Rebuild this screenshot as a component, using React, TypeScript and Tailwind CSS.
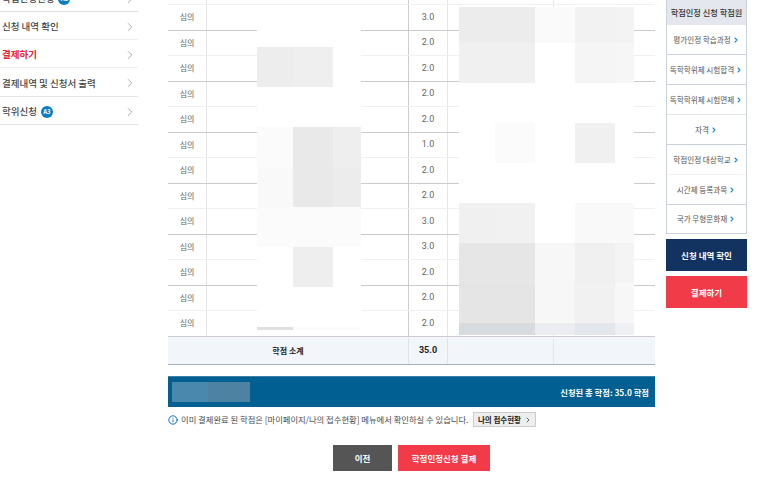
import { ChevronRight, Info } from "lucide-react";

const font = { fontFamily: '"Noto Sans CJK KR", "Noto Sans", sans-serif' };

const sideItems = [
  { label: "학점인정신청", badge: "A1", h: "h-[28px]", line: "border-[#dddddd]" },
  { label: "신청 내역 확인", h: "h-[28px]", line: "border-[#eeeeee]" },
  { label: "결제하기", active: true, h: "h-[28px]", line: "border-[#eeeeee]" },
  { label: "결제내역 및 신청서 출력", h: "h-[29px]", line: "border-[#e6e6e6]" },
  { label: "학위신청", badge: "A3", h: "h-[28px]", line: "border-[#e2e2e2]" },
];

const credits = ["3.0", "2.0", "2.0", "2.0", "2.0", "1.0", "2.0", "2.0", "3.0", "3.0", "2.0", "2.0", "2.0"];

const guideItems = [
  { label: "평가인정 학습과정", h: "h-[30px]", line: "border-[#ccd2da]" },
  { label: "독학학위제 시험합격", h: "h-[30px]", line: "border-[#ccd2da]" },
  { label: "독학학위제 시험면제", h: "h-[30px]", line: "border-[#e3e6ea]" },
  { label: "자격", h: "h-[30px]", line: "border-[#ccd2da]" },
  { label: "학점인정 대상학교", h: "h-[30px]", line: "border-[#f2f2f2]" },
  { label: "시간제 등록과목", h: "h-[30px]", line: "border-[#ccd2da]" },
  { label: "국가 무형문화재", h: "h-[28px]", line: "" },
];

// 모자이크 처리된 영역 (40px 격자)
const mosaicLeft = [
  ["h-[40px] bg-white", "bg-white", "bg-white"],
  ["h-[40px] bg-[#ededed]", "bg-[#efefef]", "bg-white"],
  ["h-[40px] bg-white", "bg-white", "bg-white"],
  ["h-[40px] bg-[#fbfbfb]", "bg-[#e9e9e9]", "bg-[#eeeeee]"],
  ["h-[40px] bg-[#f9f9f9]", "bg-[#e9e9e9]", "bg-[#ececec]"],
  ["h-[40px] bg-[#fbfbfb]", "bg-[#fbfbfb]", "bg-[#fbfbfb]"],
  ["h-[40px] bg-white", "bg-[#eeeeee]", "bg-white"],
  ["h-[40px] bg-white", "bg-white", "bg-white"],
  ["h-[3px] bg-[#e0e0e0]", "bg-[#fbfbfb]", "bg-[#fbfbfb]"],
];

const mosaicRight = [
  ["h-[36px] bg-[#ececec]", "bg-[#ececec]", "bg-[#fafafa]", "bg-[#f2f2f2]", "bg-[#f3f3f3]"],
  ["h-[40px] bg-[#f0f0f0]", "bg-[#f0f0f0]", "bg-white", "bg-[#f5f5f5]", "bg-[#f6f6f6]"],
  ["h-[40px] bg-white", "bg-white", "bg-white", "bg-white", "bg-white"],
  ["h-[40px] bg-white", "bg-[#fbfbfb]", "bg-white", "bg-[#f0f0f0]", "bg-white"],
  ["h-[40px] bg-white", "bg-white", "bg-white", "bg-white", "bg-white"],
  ["h-[40px] bg-[#f0f0f0]", "bg-[#f1f1f1]", "bg-white", "bg-[#f9f9f9]", "bg-[#f9f9f9]"],
  ["h-[40px] bg-[#e6e6e6]", "bg-[#e6e6e6]", "bg-[#f7f7f7]", "bg-[#f0f0f0]", "bg-[#f4f4f4]"],
  ["h-[40px] bg-[#e5e5e5]", "bg-[#e5e5e5]", "bg-[#f7f7f7]", "bg-[#f1f1f1]", "bg-[#f7f7f7]"],
  ["h-[12px] bg-[#d8dbde]", "bg-[#d8dbde]", "bg-[#ebedf0]", "bg-[#e3e6ea]", "bg-[#eef0f3]"],
];

function Badge({ text }: { text: string }) {
  return (
    <span className="ml-[4px] flex h-[12px] w-[12px] items-center justify-center rounded-full bg-[#0a7cc4] text-[6px] font-bold text-white">
      {text}
    </span>
  );
}

function Sidebar() {
  return (
    <aside className="-mt-[16px] w-[138px] shrink-0">
      {sideItems.map((item) => (
        <div key={item.label} className={`flex items-center justify-between border-b pl-[2px] pr-[1px] pt-[2px] ${item.h} ${item.line}`}>
          <span className="flex items-center">
            <span className={`text-[9.5px] ${item.active ? "font-bold text-[#e8202e]" : "font-medium text-[#444444]"}`}>{item.label}</span>
            {item.badge && <Badge text={item.badge} />}
          </span>
          <ChevronRight className="h-[14px] w-[14px] text-[#888888]" strokeWidth={1.2} />
        </div>
      ))}
    </aside>
  );
}

function TableRow({ credit, dark }: { credit: string; dark: boolean }) {
  return (
    <div className={`grid h-[25.5px] grid-cols-[39px_202px_39px_106px_101px] border-b text-[8px] text-[#666666] ${dark ? "border-[#cccccc]" : "border-[#f0f0f0]"}`}>
      <div className="flex items-center justify-center border-r border-[#e6e6e6]">심의</div>
      <div className="border-r border-[#cccccc]" />
      <div className="flex items-center justify-center border-r border-[#e6e6e6] font-['Roboto'] text-[9px]">{credit}</div>
      <div className="border-r border-[#e6e6e6]" />
      <div />
    </div>
  );
}

function Mosaic({ rows, cols, className }: { rows: string[][]; cols: string; className: string }) {
  return (
    <div className={`absolute ${className}`}>
      {rows.map((row, i) => (
        <div key={i} className={`grid ${cols}`}>
          {row.map((cell, j) => (
            <div key={j} className={cell} />
          ))}
        </div>
      ))}
    </div>
  );
}

function Main() {
  return (
    <main className="relative ml-[30px] w-[487px] shrink-0">
      <div className="grid h-[5px] grid-cols-[39px_202px_39px_106px_101px] border-b border-[#f0f0f0]">
        <div className="border-r border-[#e6e6e6]" />
        <div className="border-r border-[#cccccc]" />
        <div className="border-r border-[#e6e6e6]" />
        <div className="border-r border-[#e6e6e6]" />
        <div />
      </div>
      {credits.map((credit, i) => (
        <TableRow key={i} credit={credit} dark={i % 2 === 0 || i === credits.length - 1} />
      ))}
      <div className="grid h-[28px] grid-cols-[241px_39px_106px_101px] border-b border-[#a9afb6] bg-[#f2f6fb] pt-[1px] text-[8px] font-bold text-[#222222]">
        <div className="flex items-center justify-center border-r border-[#dfe3e8]">학점 소계</div>
        <div className="flex items-center justify-center border-r border-[#dfe3e8] font-['Roboto'] text-[9px]">35.0</div>
        <div className="border-r border-[#e4e8ed]" />
        <div />
      </div>

      <div className="mt-[11.5px] flex h-[31px] items-center justify-between border-t border-[#3f80a8] bg-[#015f92] pl-[4px] pr-[6px]">
        <div className="flex h-[20px] w-[78px]">
          <div className="w-[36px] bg-[#4a88ad]" />
          <div className="w-[42px] bg-[#4d82a2]" />
        </div>
        <span className="text-[8.3px] font-bold text-white">신청된 총 학점: 35.0 학점</span>
      </div>

      <div className="mt-[5px] flex h-[15px] items-center">
        <Info className="h-[10px] w-[10px] text-[#0a6fb8]" strokeWidth={2.4} />
        <span className="ml-[3px] text-[8.3px] text-[#4a4a4a]">이미 결제완료 된 학점은 [마이페이지/나의 접수현황] 메뉴에서 확인하실 수 있습니다.</span>
        <button className="ml-[5px] flex h-[15px] w-[63px] items-center justify-center border border-[#cccccc] bg-[#eeeeee] text-[7.5px] font-bold text-[#222222]">
          나의 접수현황
          <ChevronRight className="ml-[3px] h-[8px] w-[8px]" strokeWidth={2} />
        </button>
      </div>

      <div className="mt-[18px] flex justify-center gap-[6px]">
        <button className="h-[26px] w-[59px] bg-[#555555] text-[8.5px] font-bold text-white">이전</button>
        <button className="h-[26px] w-[92px] bg-[#f23b48] text-[8.5px] font-bold text-white">학점인정신청 결제</button>
      </div>

      <Mosaic className="left-[89px] top-[7px] w-[104px]" cols="grid-cols-[36px_40px_28px]" rows={mosaicLeft} />
      <Mosaic className="left-[291px] top-[7px] w-[175px]" cols="grid-cols-[36px_40px_40px_40px_19px]" rows={mosaicRight} />
    </main>
  );
}

function Guide() {
  return (
    <aside className="ml-[11px] w-[81px] shrink-0">
      <div className="border border-t-0 border-[#ccd2da]">
        <div className="flex h-[25px] items-center justify-center bg-[#e4e8ee] text-[8.2px] font-medium text-[#333333]">학점인정 신청 학점원</div>
        {guideItems.map((item) => (
          <div key={item.label} className={`flex items-center justify-center text-[7.6px] text-[#555555] ${item.h} ${item.line ? `border-b ${item.line}` : ""}`}>
            {item.label}
            <ChevronRight className="ml-[1px] h-[8px] w-[8px] text-[#1a8ad0]" strokeWidth={3.2} />
          </div>
        ))}
      </div>
      <button className="mt-[5px] block h-[32px] w-full bg-[#12325f] text-[8.5px] font-bold text-white">신청 내역 확인</button>
      <button className="mt-[5px] block h-[32px] w-full bg-[#f23b48] text-[8.5px] font-bold text-white">결제하기</button>
    </aside>
  );
}

export default function App() {
  return (
    <div className="flex h-[479px] w-[757px] overflow-hidden bg-white" style={font}>
      <Sidebar />
      <Main />
      <Guide />
    </div>
  );
}
